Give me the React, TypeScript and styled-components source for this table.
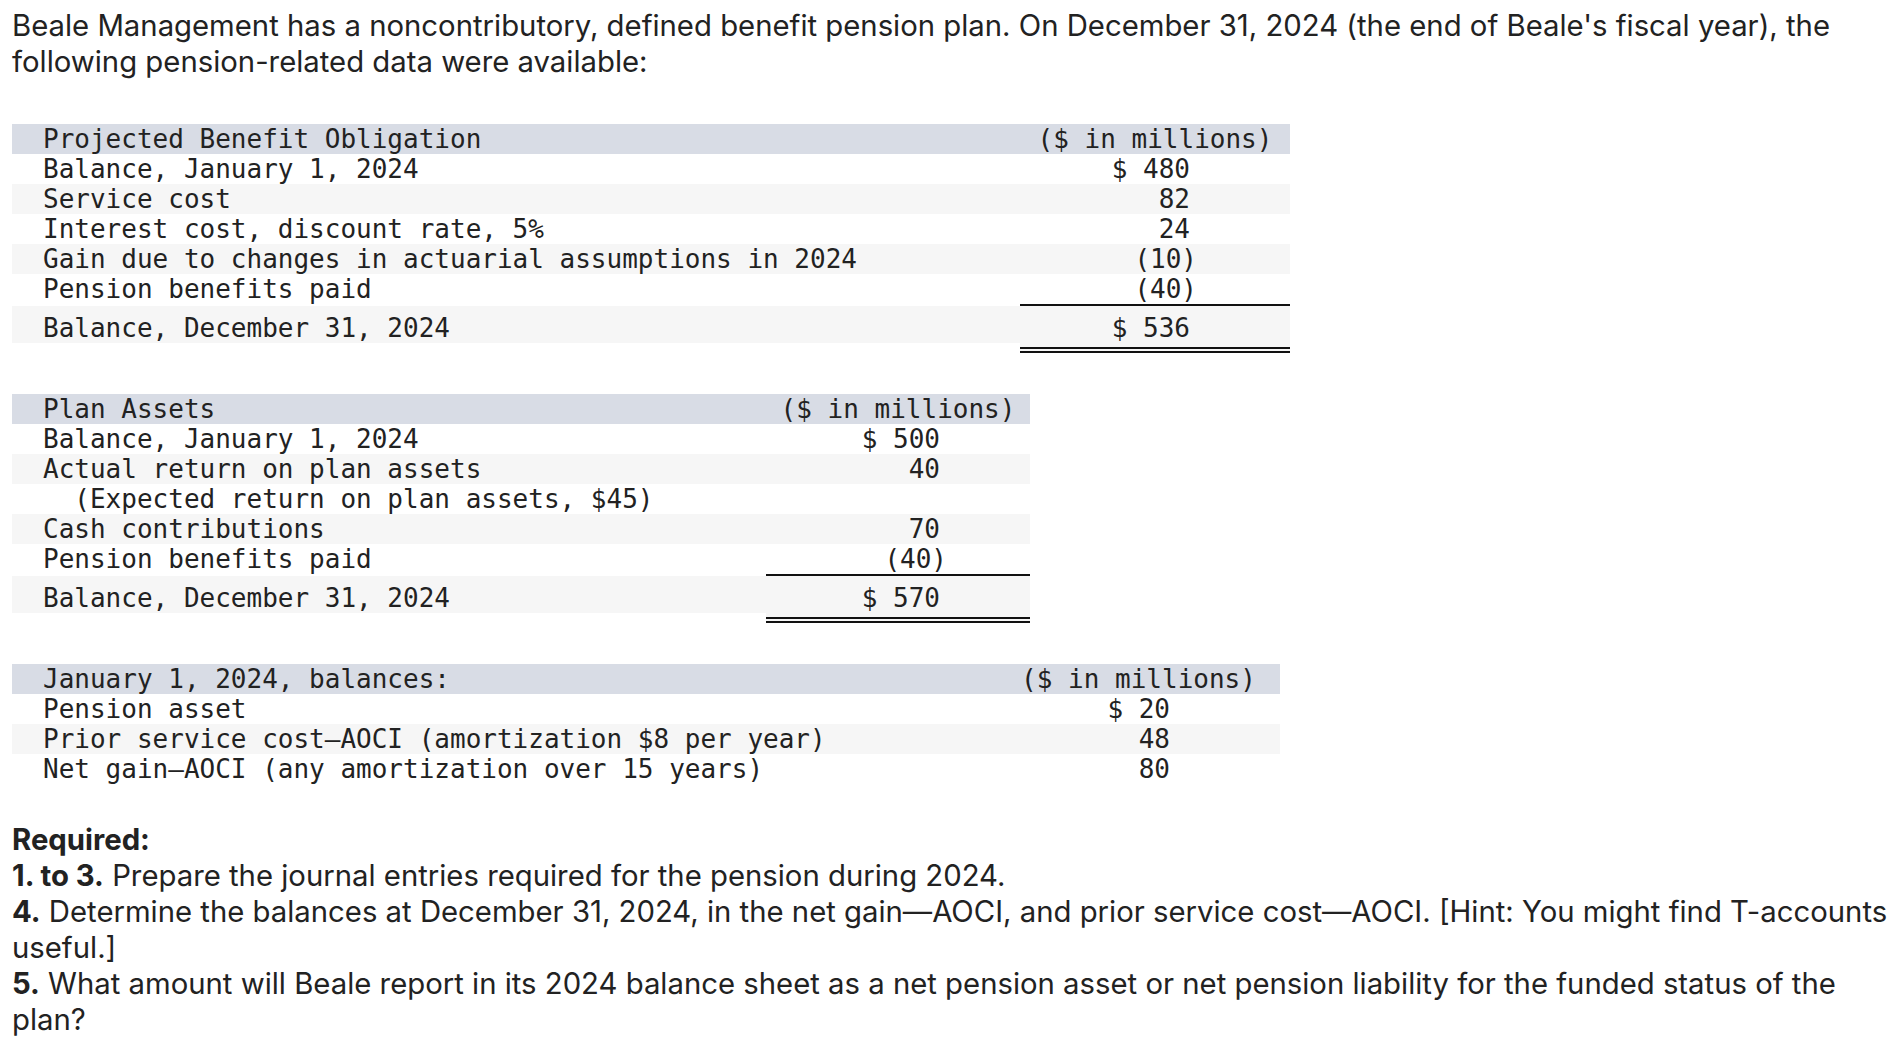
import React from "react";
import styled, { createGlobalStyle } from "styled-components";

const GlobalStyle = createGlobalStyle`
  html, body {
    margin: 0;
    padding: 0;
    background: #ffffff;
  }
  body {
    font-family: Inter, "Liberation Sans", sans-serif;
    color: #222222;
  }
`;

const Page = styled.div`
  display: flex;
  flex-direction: column;
  align-items: flex-start;
  padding: 8px 0 0 12px;
`;

const Prose = styled.p`
  margin: 0;
  width: 100%;
  font-size: 29.3px;
  line-height: 36px;
  color: #222222;
`;

const DataTable = styled.div<{ $labelW: number; $valueW: number; $gap: number }>`
  display: grid;
  grid-template-columns: ${(p) => p.$labelW}px ${(p) => p.$valueW}px;
  align-items: start;
  margin-top: ${(p) => p.$gap}px;
  font-family: "DejaVu Sans Mono", "Liberation Mono", monospace;
  font-size: 26px;
  line-height: 30px;
  color: #222222;
`;

type Tone = "head" | "white" | "gray";

const toneColor = (t: Tone) =>
  t === "head" ? "#d8dce5" : t === "gray" ? "#f6f6f6" : "#ffffff";

const LabelCell = styled.div<{ $tone: Tone; $total?: boolean }>`
  background: ${(p) => toneColor(p.$tone)};
  padding: ${(p) => (p.$total ? "7px" : "0")} 0 0 31px;
  white-space: pre;
`;

const ValueCell = styled.div<{
  $tone: Tone;
  $pad: number;
  $rule?: "single" | "double";
  $total?: boolean;
}>`
  background: ${(p) => toneColor(p.$tone)};
  text-align: ${(p) => (p.$tone === "head" ? "center" : "right")};
  padding-right: ${(p) => (p.$tone === "head" ? 0 : p.$pad)}px;
  padding-top: ${(p) => (p.$total ? 7 : 0)}px;
  padding-bottom: ${(p) => (p.$rule === "double" ? 4 : 0)}px;
  border-bottom: ${(p) =>
    p.$rule === "single"
      ? "2px solid #111111"
      : p.$rule === "double"
      ? "6px double #111111"
      : "none"};
  white-space: pre;
`;

const Amount = styled.span<{ $neg?: boolean }>`
  display: inline-block;
  margin-right: ${(p) => (p.$neg ? -7 : 0)}px;
`;

const Required = styled.div`
  margin-top: 38px;
  width: 100%;
  font-size: 29.3px;
  line-height: 36px;
  color: #222222;
`;

const Item = styled.div`
  margin: 0;
`;

const Strong = styled.strong`
  font-weight: 700;
`;

const NoWrap = styled.span`
  white-space: nowrap;
`;

type Row = {
  label: string;
  value?: string;
  rule?: "single" | "double";
  total?: boolean;
};

type TableSpec = {
  heading: string;
  labelW: number;
  valueW: number;
  pad: number;
  gap: number;
  rows: Row[];
};

const tables: TableSpec[] = [
  {
    heading: "Projected Benefit Obligation",
    labelW: 1008,
    valueW: 270,
    pad: 100,
    gap: 44,
    rows: [
      { label: "Balance, January 1, 2024", value: "$ 480" },
      { label: "Service cost", value: "82" },
      { label: "Interest cost, discount rate, 5%", value: "24" },
      { label: "Gain due to changes in actuarial assumptions in 2024", value: "(10)" },
      { label: "Pension benefits paid", value: "(40)", rule: "single" },
      { label: "Balance, December 31, 2024", value: "$ 536", rule: "double", total: true },
    ],
  },
  {
    heading: "Plan Assets",
    labelW: 754,
    valueW: 264,
    pad: 90,
    gap: 41,
    rows: [
      { label: "Balance, January 1, 2024", value: "$ 500" },
      { label: "Actual return on plan assets", value: "40" },
      { label: "  (Expected return on plan assets, $45)" },
      { label: "Cash contributions", value: "70" },
      { label: "Pension benefits paid", value: "(40)", rule: "single" },
      { label: "Balance, December 31, 2024", value: "$ 570", rule: "double", total: true },
    ],
  },
  {
    heading: "January 1, 2024, balances:",
    labelW: 985,
    valueW: 283,
    pad: 110,
    gap: 41,
    rows: [
      { label: "Pension asset", value: "$ 20" },
      { label: "Prior service cost\u2014AOCI (amortization $8 per year)", value: "48" },
      { label: "Net gain\u2014AOCI (any amortization over 15 years)", value: "80" },
    ],
  },
];

function PensionTable({ spec }: { spec: TableSpec }) {
  return (
    <DataTable $labelW={spec.labelW} $valueW={spec.valueW} $gap={spec.gap}>
      <LabelCell $tone="head">{spec.heading}</LabelCell>
      <ValueCell $tone="head" $pad={0}>
        ($ in millions)
      </ValueCell>
      {spec.rows.map((r, i) => {
        const tone: Tone = i % 2 === 0 ? "white" : "gray";
        return (
          <React.Fragment key={i}>
            <LabelCell $tone={tone} $total={r.total}>
              {r.label}
            </LabelCell>
            <ValueCell $tone={tone} $pad={spec.pad} $rule={r.rule} $total={r.total}>
              {r.value ? (
                <Amount $neg={r.value.startsWith("(")}>{r.value}</Amount>
              ) : (
                " "
              )}
            </ValueCell>
          </React.Fragment>
        );
      })}
    </DataTable>
  );
}

export default function App() {
  return (
    <>
      <GlobalStyle />
      <Page>
        <Prose>
          Beale Management has a noncontributory, defined benefit pension plan. On December 31,
          2024 (the end of Beale's fiscal year), the following pension-related data were
          available:
        </Prose>
        {tables.map((t) => (
          <PensionTable key={t.heading} spec={t} />
        ))}
        <Required>
          <Item>
            <Strong>Required:</Strong>
          </Item>
          <Item>
            <Strong>1. to 3.</Strong> Prepare the journal entries required for the pension during
            2024.
          </Item>
          <Item>
            <Strong>4.</Strong> Determine the balances at December 31, 2024, in the net gain—AOCI,
            and prior service cost—AOCI. [Hint: You might find <NoWrap>T-accounts</NoWrap>{" "}
            useful.]
          </Item>
          <Item>
            <Strong>5.</Strong> What amount will Beale report in its 2024 balance sheet as a net
            pension asset or net pension liability for the funded status of the plan?
          </Item>
        </Required>
      </Page>
    </>
  );
}
